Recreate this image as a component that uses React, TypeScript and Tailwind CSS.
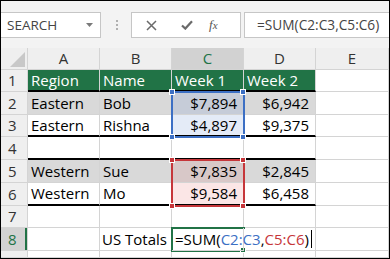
import React from "react";

const GRID = "border-r border-b border-[#d4d4d4]";

function Corner({ x, y, color }: { x: number; y: number; color: string }) {
  return (
    <div
      className="absolute w-[6px] h-[6px] border border-white"
      style={{ left: x - 3, top: y - 3, backgroundColor: color }}
    />
  );
}

export default function App() {
  const font = { fontFamily: '"Open Sans", "Noto Sans", sans-serif' };
  const cell = "flex items-center overflow-hidden whitespace-nowrap text-[15px] text-black";
  const rowHead = `${GRID} flex items-center pl-[7px] text-[15px] text-[#333] bg-[#efefef]`;
  const colHead = `${GRID} flex items-center justify-center text-[15px] text-[#333] bg-[#efefef]`;
  const thick = "border-r border-r-[#d4d4d4] border-b-2 border-b-black";
  const green = "bg-[#217346] text-white";
  const gray = "bg-[#d9d9d9]";

  return (
    <div className="w-[390px] h-[259px] border border-black bg-[#f3f3f3] overflow-hidden flex flex-col" style={font}>
      {/* toolbar */}
      <div className="h-[47px] shrink-0 flex items-start pt-[11px]">
        <div className="w-[100px] h-[26px] bg-white border border-l-0 border-[#c6c6c6] flex items-center pl-[6px] pr-[7px]">
          <span className="text-[13.5px] text-[#444] flex-1">SEARCH</span>
          <svg width="7" height="4" viewBox="0 0 7 4"><path d="M0 0H7L3.5 4Z" fill="#7a7a7a" /></svg>
        </div>
        <div className="ml-[15px] mt-[8px] flex flex-col gap-[2px]">
          <div className="w-[2px] h-[2px] bg-[#b0b0b0]" />
          <div className="w-[2px] h-[2px] bg-[#b0b0b0]" />
          <div className="w-[2px] h-[2px] bg-[#b0b0b0]" />
        </div>
        <div className="ml-[13px] w-[110px] h-[26px] bg-white border border-[#c6c6c6] flex items-center">
          <svg className="ml-[14px]" width="11" height="11" viewBox="0 0 11 11">
            <path d="M1 1L10 10M10 1L1 10" stroke="#6a6a6a" strokeWidth="1.5" />
          </svg>
          <svg className="ml-[24px]" width="12" height="10" viewBox="0 0 12 10">
            <path d="M1 5.5L4.3 8.6L11 1.2" stroke="#6a6a6a" strokeWidth="2.2" fill="none" />
          </svg>
          <span className="ml-[16px] italic text-[13px] text-[#555]" style={{ fontFamily: '"Liberation Serif", serif' }}>
            f<span className="text-[11px]">x</span>
          </span>
        </div>
        <div className="ml-[3px] flex-1 h-[26px] bg-white border border-r-0 border-[#c6c6c6] flex items-center pl-[12px]">
          <span className="text-[13.7px] text-[#444]">=SUM(C2:C3,C5:C6)</span>
        </div>
      </div>

      {/* grid */}
      <div className="relative flex-1 bg-white">
        <div className="grid grid-cols-[27px_72px_72px_72px_72px_73px] grid-rows-[22px_22px_23px_22px_23px_23px_23px_22px_23px_7px]">
          {/* header row */}
          <div className={`${GRID} bg-[#efefef] relative`}>
            <svg className="absolute right-[2px] bottom-[2px]" width="15" height="15" viewBox="0 0 15 15">
              <path d="M15 0V15H0Z" fill="#c8c8c8" />
            </svg>
          </div>
          <div className={colHead}>A</div>
          <div className={colHead}>B</div>
          <div className={`${GRID} flex items-center justify-center text-[15px] text-[#217346] bg-[#d2d2d2]`}>C</div>
          <div className={colHead}>D</div>
          <div className={colHead}>E</div>

          {/* row 1 */}
          <div className={rowHead}>1</div>
          <div className={`${cell} ${thick} ${green} pl-[3px]`}>Region</div>
          <div className={`${cell} ${thick} ${green} pl-[3px]`}>Name</div>
          <div className={`${cell} ${thick} ${green} pl-[3px]`}>Week 1</div>
          <div className={`${cell} ${thick} ${green} pl-[3px]`}>Week 2</div>
          <div className={`${cell} ${GRID}`}></div>

          {/* row 2 */}
          <div className={rowHead}>2</div>
          <div className={`${cell} ${GRID} ${gray} pl-[3px]`}>Eastern</div>
          <div className={`${cell} ${GRID} ${gray} pl-[3px]`}>Bob</div>
          <div className={`${cell} ${GRID} bg-[#c6ccd8] justify-end pr-[6px]`}>$7,894</div>
          <div className={`${cell} ${GRID} ${gray} justify-end pr-[6px]`}>$6,942</div>
          <div className={`${cell} ${GRID}`}></div>

          {/* row 3 */}
          <div className={rowHead}>3</div>
          <div className={`${cell} ${thick} pl-[3px]`}>Eastern</div>
          <div className={`${cell} ${thick} pl-[3px]`}>Rishna</div>
          <div className={`${cell} ${thick} bg-[#e4ebf7] justify-end pr-[6px]`}>$4,897</div>
          <div className={`${cell} ${thick} justify-end pr-[6px]`}>$9,375</div>
          <div className={`${cell} ${GRID}`}></div>

          {/* row 4 */}
          <div className={rowHead}>4</div>
          <div className={`${cell} ${thick}`}></div>
          <div className={`${cell} ${thick}`}></div>
          <div className={`${cell} ${thick}`}></div>
          <div className={`${cell} ${thick}`}></div>
          <div className={`${cell} ${GRID}`}></div>

          {/* row 5 */}
          <div className={rowHead}>5</div>
          <div className={`${cell} ${GRID} ${gray} pl-[3px]`}>Western</div>
          <div className={`${cell} ${GRID} ${gray} pl-[3px]`}>Sue</div>
          <div className={`${cell} ${GRID} bg-[#d8c8c8] justify-end pr-[6px]`}>$7,835</div>
          <div className={`${cell} ${GRID} ${gray} justify-end pr-[6px]`}>$2,845</div>
          <div className={`${cell} ${GRID}`}></div>

          {/* row 6 */}
          <div className={rowHead}>6</div>
          <div className={`${cell} ${thick} pl-[3px]`}>Western</div>
          <div className={`${cell} ${thick} pl-[3px]`}>Mo</div>
          <div className={`${cell} ${thick} bg-[#fbe6e6] justify-end pr-[6px]`}>$9,584</div>
          <div className={`${cell} ${thick} justify-end pr-[6px]`}>$6,458</div>
          <div className={`${cell} ${GRID}`}></div>

          {/* row 7 */}
          <div className={rowHead}>7</div>
          <div className={`${cell} ${GRID}`}></div>
          <div className={`${cell} ${GRID}`}></div>
          <div className={`${cell} ${GRID}`}></div>
          <div className={`${cell} ${GRID}`}></div>
          <div className={`${cell} ${GRID}`}></div>

          {/* row 8 */}
          <div className={`${GRID} flex items-center pl-[7px] text-[15px] text-[#217346] bg-[#d2d2d2] relative`}>
            8
            <div className="absolute right-0 top-0 bottom-0 w-[2px] bg-[#217346]" />
          </div>
          <div className={`${cell} ${GRID}`}></div>
          <div className={`${cell} ${GRID} pl-[2px]`}>US Totals</div>
          <div className={`${GRID} relative z-10 overflow-visible`}>
            <div className="absolute left-[3px] top-0 bottom-0 flex items-center whitespace-nowrap text-[15px] text-black">
              <span>=SUM(</span>
              <span className="text-[#3c6fc4]">C2:C3</span>
              <span>,</span>
              <span className="text-[#c6363a]">C5:C6</span>
              <span>)</span>
              <span className="inline-block w-[1px] h-[18px] bg-black ml-[2px]" />
            </div>
          </div>
          <div className={`${GRID}`}></div>
          <div className={`${GRID}`}></div>

          {/* row 9 */}
          <div className={`${GRID} bg-[#efefef]`}></div>
          <div className={GRID}></div>
          <div className={GRID}></div>
          <div className={GRID}></div>
          <div className={GRID}></div>
          <div className={GRID}></div>
        </div>

        {/* blue range C2:C3 */}
        <div className="absolute left-[170px] top-[43px] w-[74px] h-[47px] border-2 border-[#3c6fc4]" />
        <Corner x={171} y={44} color="#3c6fc4" />
        <Corner x={242} y={44} color="#3c6fc4" />
        <Corner x={171} y={89} color="#3c6fc4" />
        <Corner x={242} y={89} color="#3c6fc4" />

        {/* red range C5:C6 */}
        <div className="absolute left-[170px] top-[111px] w-[74px] h-[48px] border-2 border-[#c6363a]" />
        <Corner x={171} y={112} color="#c6363a" />
        <Corner x={242} y={112} color="#c6363a" />
        <Corner x={171} y={158} color="#c6363a" />
        <Corner x={242} y={158} color="#c6363a" />

        {/* active cell C8 */}
        <div className="absolute left-[170px] top-[179px] w-[74px] h-[25px] border-2 border-r-0 border-[#217346]" />
        <Corner x={242} y={202} color="#217346" />
      </div>
    </div>
  );
}
